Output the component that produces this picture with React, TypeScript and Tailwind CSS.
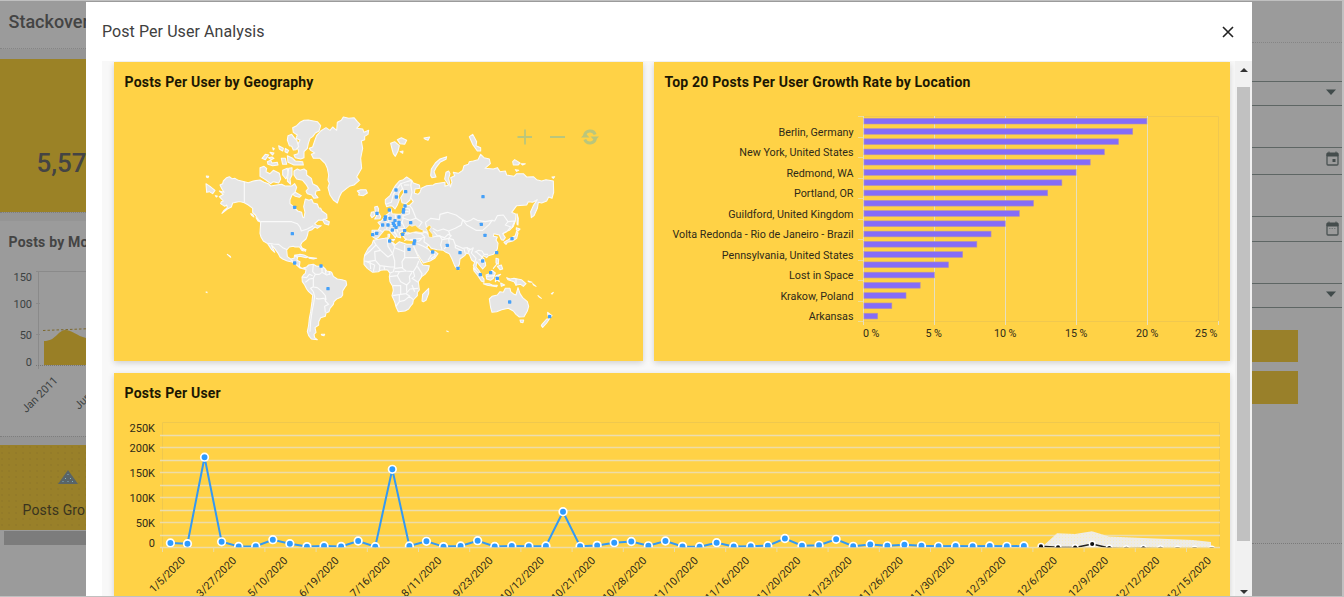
import React from "react";

const LAND = "#e5e5e5";
const EDGE = "#fafafa";

const AMERICAS: string[] = [
  "58,258 72,262 66,252 60,240 68,236 70,228 80,218 88,215 96,221 105,220 115,226 133,230 145,233 160,228 180,225 192,232 205,236 212,243 230,240 245,238 255,243 275,243 284,236 290,247 285,262 276,270 270,284 270,296 280,305 293,318 305,322 308,336 312,338 315,322 311,305 316,282 327,286 335,283 340,294 352,297 356,308 362,310 366,318 380,328 381,340 370,346 356,345 344,356 352,362 364,362 352,370 345,366 336,374 325,378 322,392 318,402 306,412 302,420 310,438 305,436 298,425 285,426 280,424 268,426 260,435 262,455 272,462 282,460 284,450 294,450 291,466 300,470 298,484 306,490 318,488 314,493 300,489 290,480 280,472 262,468 248,462 240,456 235,446 222,428 214,420 224,442 215,434 203,416 190,408 183,396 180,385 182,352 175,345 166,330 158,322 158,310 145,300 133,293 122,290 115,290 98,294 94,306 82,312 66,325 72,316 82,308 80,300 74,304 62,296 64,290 70,288 58,275 70,268",
  "278,68 290,62 300,52 312,46 325,45 352,50 362,62 357,78 346,84 338,95 330,100 325,115 322,130 312,140 312,158 302,162 286,158 282,150 294,146 296,138 290,125 300,105 288,100 292,90 280,82",
  "264,92 275,88 284,100 290,105 296,125 288,134 280,135 275,124 268,122 262,105",
  "345,105 350,92 362,78 378,68 390,76 398,66 410,76 412,52 424,46 430,36 446,40 462,38 472,50 480,58 470,70 488,72 492,82 506,76 504,88 494,94 494,104 484,108 488,130 484,150 482,160 485,190 478,202 470,216 478,226 462,240 448,244 440,250 425,262 418,276 412,294 400,285 390,270 384,248 388,235 384,225 386,210 382,190 376,176 368,168 360,160 340,160 334,148 344,144 332,136 328,130 338,126",
  "180,188 192,184 200,190 198,200 210,206 220,196 238,205 242,222 236,234 220,230 212,236 196,224 180,214",
  "282,198 292,192 300,196 312,192 320,198 320,210 334,220 338,236 352,244 360,256 348,258 346,268 354,278 342,280 335,270 322,266 318,258 325,250 318,238 308,226 290,222 282,210",
  "248,196 262,190 264,206 258,222 248,210", "266,190 276,188 276,210 270,222 272,238 262,228",
  "186,160 196,148 206,150 196,164", "202,170 212,166 216,174 232,172 234,180 218,182 204,178",
  "236,122 250,130 248,138 238,132", "256,130 266,136 262,144 255,140", "244,160 256,160 260,178 248,178", "262,152 278,160 286,168 308,170 310,180 282,180 264,172",
  "210,142 222,144 218,150", "218,128 223,131 220,135", "205,158 216,156 222,160 214,164", "18,236 30,244 45,256 38,266 28,260 20,262", "19,213 26,214 24,218 20,217", "46,272 52,273 49,276",
  "286,262 304,272 298,277 286,274 278,268", "472,258 482,254 498,254 502,264 490,272 476,270 478,264", "368,346 372,342 378,346 388,350 386,360 374,356", "152,326 158,328 162,336 156,332", "168,338 180,350 174,348",
  "284,452 300,448 312,450 324,456 318,458 300,454 290,456", "326,457 338,458 350,460 340,462 328,460", "304,428 318,434 316,439", "82,448 91,454 92,457", "364,688 374,688 372,692 366,691", "18,561 21,561 21,563",
  "312,488 320,486 326,480 340,478 350,484 366,483 376,492 380,498 392,500 396,504 400,514 412,522 426,524 438,528 440,540 434,548 428,558 428,570 424,576 410,582 402,590 400,598 390,610 387,620 378,624 376,634 362,638 356,650 356,660 345,668 348,682 342,688 344,698 352,704 334,702 326,692 322,680 326,660 328,640 332,620 336,590 338,570 326,560 320,552 314,540 307,530 306,516 312,508 316,505 318,494",
];

const AMERICA_BORDERS: string[] = [
  "133,230 133,293", "182,350 275,350 292,356 300,366 304,378 322,372 340,362", "205,415 220,417 236,418 248,428 262,434", "272,464 278,468 280,474",
  "340,478 338,500 346,508 340,520 328,522 316,532", "306,516 320,518 328,508 338,512", "340,520 340,545 332,550 340,560", "345,508 358,508 366,502 380,510 392,506", "366,483 366,500", "376,494 378,508", "388,500 388,510",
  "340,546 352,548 366,560 376,572 378,584 370,580 356,582 348,580", "340,560 344,575 340,600 336,620 332,650 330,680", "376,574 376,588 386,598 374,604 376,622",
];

const OLD_WORLD: string[] = [
  "40,406 60,402 74,400 84,398 88,410 100,414 106,420 118,410 140,418 160,418 164,432 172,450 182,470 188,480 208,482 205,495 195,508 185,515 175,530 178,555 172,562 172,572 160,585 158,596 152,603 146,612 135,618 115,620 108,605 104,590 96,572 100,556 98,544 90,530 88,515 90,505 84,496 78,494 62,496 55,500 38,502 30,496 22,490 12,478 12,462 14,450 25,430 36,418",
  "36,394 36,376 55,375 62,362 54,352 64,348 70,340 76,332 88,324 86,316 92,310 96,326 110,328 124,327 132,318 130,304 136,299 148,302 160,290 152,278 154,262 152,244 155,226 160,234 178,240 180,250 165,252 163,265 174,268 180,262 184,250 200,242 220,240 226,236 240,234 255,232 255,244 266,240 254,222 258,202 266,198 270,206 266,220 271,246 276,232 272,218 284,212 280,202 295,205 308,196 312,182 325,178 328,170 340,168 354,164 362,148 372,158 388,162 391,176 375,190 400,192 412,188 420,200 436,198 440,210 462,214 470,206 490,206 500,216 520,215 530,224 545,228 558,224 580,228 581,262 576,280 566,276 560,288 545,294 535,292 532,310 522,332 514,338 512,320 520,302 532,284 518,292 505,290 500,300 470,302 455,322 468,328 466,348 460,364 448,376 438,380 428,386 436,398 430,406 424,404 418,390 402,386 400,394 412,396 408,405 414,415 412,432 400,448 385,452 380,458 370,452 364,460 376,472 377,482 368,492 358,480 350,470 348,486 358,498 366,514 360,514 350,500 340,482 344,472 335,465 328,448 320,444 314,452 300,462 298,478 290,490 284,482 276,462 268,446 258,442 250,436 232,434 214,430 206,420 200,426 212,440 226,440 234,446 224,460 210,468 190,474 182,462 172,446 162,426 164,408 150,406 138,404 128,392 140,384 130,378 118,384 122,398 112,396 108,386 98,370 90,370 110,390 106,398 100,390 88,376 74,374 66,384 56,396 48,402",
  "80,305 76,294 76,284 90,272 100,252 106,242 118,228 130,224 140,216 155,226 152,240 156,262 150,285 138,296 126,293 122,278 132,262 128,250 118,262 114,276 118,284 112,300 105,312 98,304 90,302",
  "44,306 52,304 56,312 54,322 62,334 60,341 44,342 50,332 46,322", "34,322 42,320 44,332 36,338 32,332",
  "186,588 188,568 200,556 206,550 206,565 198,586 190,590", "388,582 396,574 412,570 420,560 430,562 436,550 450,550 452,560 462,568 468,570 474,548 480,566 488,578 502,590 506,604 502,618 492,635 478,636 468,628 460,618 445,610 425,614 410,620 396,622 392,608 390,595",
  "480,645 491,645 489,653 482,652", "563,622 576,632 568,640 564,632", "546,658 560,642 568,642 560,654 548,667 544,662",
  "340,488 348,496 360,508 372,522 372,532 364,528 352,510 342,498", "370,536 388,536 398,541 412,541 410,545 382,541", "378,510 388,506 396,496 406,504 400,520 392,526 380,522", "408,512 422,508 412,516 418,530 410,524 406,530",
  "440,518 450,522 462,520 484,524 498,536 490,544 482,538 468,540 462,530 444,524", "408,460 416,462 415,478 408,474", "412,484 424,480 428,492 420,494", "400,490 410,478", "296,486 299,490 296,494",
  "432,412 442,406 454,398 466,392 470,378 474,384 470,400 458,408 442,412 438,418", "469,368 480,372 474,378 469,374", "471,326 475,340 474,360 471,358",
  "92,115 104,110 118,122 114,138 106,154 100,146 96,132", "112,104 124,98 140,106 134,118 120,116", "120,140 129,138 128,145", "192,99 209,96 204,106 196,103", "212,212 214,192 226,174 240,162 260,155 258,163 240,172 228,188 222,200 228,216 216,218",
  "328,95 338,88 350,110 348,122 362,128 362,138 352,138 338,118", "458,170 464,164 480,174 474,180 460,180", "483,176 496,176 488,180", "466,194 476,196 470,199", "576,216 584,215 580,220",
  "504,528 516,532 508,531", "518,536 528,544 522,541", "534,572 544,580 538,576", "574,566 580,562 577,567", "260,678 265,680", "140,402 134,407", "94,404 104,403 100,408", "84,388 89,388 88,397 84,396", "422,534 434,540 424,544",
];

const WATERS: string[] = [
  "134,374 148,360 156,364 166,360 176,370 190,376 188,383 168,380 150,384 138,380",
  "198,370 208,360 214,366 208,376 218,388 218,398 206,396 204,382",
];

const BORDERS: string[] = [
  "40,406 48,420 30,438 14,452", "48,420 62,436 84,456 98,446 84,424 82,400", "62,436 44,440 46,466 24,470 12,468", "98,446 104,424 96,412", "104,428 134,440 134,420", "134,440 134,458 174,458", "134,458 126,470 128,490 138,498 160,500 170,484 176,468", "98,446 104,468 104,486 92,486 60,482 46,466", "60,482 58,498", "72,484 74,494", "44,480 40,500", "30,470 32,492", "20,470 44,480", "104,486 100,500 90,504", "126,488 104,490", "104,500 120,500 138,498", "88,515 112,512 118,500", "112,512 122,530 140,540 150,530 148,515 156,502", "160,500 164,514 156,520 174,532", "172,484 186,506 184,516", "98,542 122,542 122,568 98,572", "122,568 138,566 150,552 174,550", "140,540 140,560", "118,570 118,590 108,604", "118,590 134,586 148,574 160,584", "138,566 150,574", "156,540 164,560", "40,392 44,378", "58,376 68,380", "72,344 84,354 80,372", "86,330 86,350", "84,354 100,356 112,350", "106,330 108,348 126,352 130,340 128,328", "92,362 108,362 126,354", "108,362 114,382", "116,372 134,370", "126,352 134,368", "126,338 150,346 168,340 186,352 176,366", "132,308 148,312 148,326 130,332", "132,318 146,320", "148,300 156,310 168,340", "78,298 94,292 100,268 122,236 140,230 155,226", "122,236 128,252", "132,240 148,240", "140,388 160,382 184,386 194,396 184,400 150,404", "184,386 198,380 206,390", "176,372 200,384",
  "194,396 192,410 206,420", "164,410 178,408 186,400", "172,416 190,424 204,432", "212,462 226,452 218,440", "204,466 214,450", "218,396 240,392 246,404 242,420 246,434", "196,352 212,340 238,344 240,328 262,322 288,330 308,344", "196,352 200,368 214,366", "308,344 320,350 332,346 340,340 352,346 376,350 396,346 404,348 412,332 430,330 444,350 464,348 456,368", "308,344 304,360 286,370 266,378 250,372 232,378 218,370", "220,378 232,392 254,398 264,388 274,392 266,400 246,404", "266,378 270,390", "308,344 320,360 348,376 368,376 388,358 396,346", "444,350 436,360 452,366 442,378", "266,400 268,416 252,432", "266,400 280,404 286,420 308,430 322,428 332,434 340,428", "286,420 286,428 308,438", "312,432 316,446", "322,428 326,442 330,430", "340,428 334,444 348,460 344,472", "348,440 360,450 372,462 370,476", "344,442 356,436 366,438 372,448 384,448", "356,464 374,466", "428,386 440,380", "468,522 468,542", "378,514 404,512",
];

const AMERICA_DOTS = [[284, 307], [277, 386], [284, 474], [363, 483], [384, 551]];
const OLD_WORLD_DOTS = [
  [108, 255], [137, 260], [109, 276], [51, 325], [88, 315], [135, 303], [131, 314], [130, 321], [76, 336], [75, 343], [90, 340], [117, 336], [105, 347], [68, 360], [84, 360], [100, 355], [117, 352], [117, 359], [103, 361], [108, 367], [152, 353], [97, 375], [134, 377], [128, 388], [50, 385], [38, 389], [89, 408], [164, 408], [162, 416], [147, 433], [218, 441], [262, 421], [300, 443], [294, 490], [369, 275], [364, 358], [375, 391], [456, 401], [410, 443], [368, 468], [361, 509], [392, 503], [412, 520], [449, 591], [569, 635],
];

function Dots({ points }: { points: number[][] }) {
  return (
    <>
      {points.map(([x, y]) => (
        <rect key={`${x}-${y}`} x={x - 5} y={y - 5} width={10} height={10} rx={2} fill="#45a0f8" />
      ))}
    </>
  );
}

function Shapes({ items }: { items: string[] }) {
  return (
    <g fill={LAND} stroke={EDGE} strokeWidth={3.2} strokeLinejoin="round">
      {items.map((p) => (
        <polygon key={p} points={p} />
      ))}
    </g>
  );
}

function Lines({ items }: { items: string[] }) {
  return (
    <g fill="none" stroke={EDGE} strokeWidth={3.4} strokeLinejoin="round">
      {items.map((p) => (
        <polyline key={p} points={p} />
      ))}
    </g>
  );
}

function WorldMap() {
  return (
    <svg className="block h-[263px] w-full" viewBox="114 98 529 263">
      <g transform="translate(200 105) scale(0.33333)">
        <Shapes items={AMERICAS} />
        <Lines items={AMERICA_BORDERS} />
        <Dots points={AMERICA_DOTS} />
      </g>
      <g transform="translate(360 105) scale(0.33333)">
        <Shapes items={OLD_WORLD} />
        <Lines items={BORDERS} />
        <g fill="#ffd246" stroke={EDGE} strokeWidth={2}>
          {WATERS.map((p) => (
            <polygon key={p} points={p} />
          ))}
        </g>
        <Dots points={OLD_WORLD_DOTS} />
      </g>
      <g stroke="#bac67c" strokeWidth={1.8} fill="none">
        <path d="M517.5 137h14.5M525 129.500v15M550 137h15" />
        <path d="M584.600 136a5.500 5.500 0 0 1 10.600-1.500M595.400 138a5.500 5.500 0 0 1-10.600 1.500" strokeWidth={3} />
        <path d="M590.500 136.500h8.500l-4.200 4.500zM589.500 137.500h-8.500l4.200-4.500z" fill="#bac67c" stroke="none" />
      </g>
    </svg>
  );
}

const LOCATIONS = ["Berlin, Germany", "New York, United States", "Redmond, WA", "Portland, OR", "Guildford, United Kingdom", "Volta Redonda - Rio de Janeiro - Brazil", "Pennsylvania, United States", "Lost in Space", "Krakow, Poland", "Arkansas"];

function GrowthChart() {
  const bars = Array.from({ length: 20 }, (_, i) => 20 - i);
  return (
    <svg className="block h-[263px] w-full font-[Roboto,sans-serif] text-[10.750px]" viewBox="654 98 576 263">
      <path d="M863 116.500H1218.500V321.500H863" fill="none" stroke="#f0c84f" />
      <path d="M863.500 116v206M934.500 116v209M1005.500 116v209M1076.500 116v209M1147.500 116v209M863.500 321v4M1218.500 321v4" stroke="#e6dfc0" />
      <g stroke="#ecdda0">
        {Array.from({ length: 11 }, (_, i) => (
          <path key={i} d={`M858 ${Math.round(116 + i * 20.5) + 0.5}h5`} />
        ))}
      </g>
      {bars.map((v, i) => (
        <rect key={v} x={864} y={118.3 + i * 10.26} width={v * 14.17 - 0.5} height={5.7} fill="#856cf8" stroke="#b493ae" strokeWidth={0.6} />
      ))}
      <g fill="#2f2a18" textAnchor="end">
        {LOCATIONS.map((name, i) => (
          <text key={name} x={853.5} y={136 + i * 20.45}>{name}</text>
        ))}
        <text x={879.5} y={337}>0 %</text>
        <text x={942} y={337}>5 %</text>
        <text x={1016.5} y={337}>10 %</text>
        <text x={1087.5} y={337}>15 %</text>
        <text x={1158.5} y={337}>20 %</text>
        <text x={1217.5} y={337}>25 %</text>
      </g>
    </svg>
  );
}

const POST_Y = [543, 543.7, 457.2, 541.8, 546.5, 546.3, 539.7, 543.7, 546.6, 546, 546.4, 541, 546.7, 469.3, 546, 541.3, 546.6, 546, 540.7, 546.5, 546, 546.3, 546, 511.7, 546.3, 545.4, 542.7, 541.5, 545.8, 541, 546.4, 546.7, 542.7, 546.5, 546.2, 545.7, 538.5, 545.7, 545.3, 539.3, 546.3, 544.5, 545.8, 544.7, 545.8, 546.3, 546, 546.3, 546, 546.3, 546];
const FORECAST_Y = [546.4, 547.2, 547.5, 544, 548, 548.8, 548.4, 548.8, 549, 549, 549];
const DATES = ["1/5/2020", "3/27/2020", "5/10/2020", "6/19/2020", "7/16/2020", "8/11/2020", "9/23/2020", "10/12/2020", "10/21/2020", "10/28/2020", "11/10/2020", "11/16/2020", "11/20/2020", "11/23/2020", "11/26/2020", "11/30/2020", "12/3/2020", "12/6/2020", "12/9/2020", "12/12/2020", "12/15/2020"];
const pointX = (i: number) => 170.4 + i * 17.07;

function PostsChart() {
  const posts = POST_Y.map((y, i) => `${pointX(i)},${y}`).join(" ");
  const forecast = FORECAST_Y.map((y, i) => `${pointX(i + 51)},${y}`).join(" ");
  const ticks = [["250K", 432], ["200K", 452], ["150K", 477], ["100K", 502], ["50K", 527], ["0", 547]] as const;
  return (
    <svg className="block h-[187px] w-full font-[Roboto,sans-serif] text-[11px]" viewBox="114 409 1116 187">
      <defs>
        <clipPath id="plot"><rect x={160} y={420} width={1060} height={127.3} /></clipPath>
        <pattern id="grain" width={3} height={3} patternUnits="userSpaceOnUse">
          <rect width={3} height={3} fill="#eeece6" />
          <rect width={1} height={1} fill="#f7ecc4" />
        </pattern>
      </defs>
      <path d="M162.500 547V422.500H1219.500V547" fill="none" stroke="#efc84e" />
      {[435, 447.5, 460, 472.5, 485, 497.5, 510, 522.5, 535, 547.5].map((y) => (
        <path key={y} d={`M160 ${Math.floor(y) + 0.5}H1220`} stroke={y % 1 ? "#eddca6" : "#ebddb0"} strokeWidth={1.4} />
      ))}
      {DATES.map((d, i) => (
        <path key={d} d={`M${162.5 + i * 51.2} 547v5`} stroke="#e9dca8" />
      ))}
      <polygon points="1042,547 1057,533.300 1075,534 1092,531.300 1109,536.500 1143,538 1193,540 1211,542 1211,547" fill="url(#grain)" />
      <g clipPath="url(#plot)">
        <polyline points={posts} fill="none" stroke="#3399f3" strokeWidth={2} />
        <polyline points={forecast} fill="none" stroke="#222" strokeWidth={1.6} />
        {POST_Y.map((y, i) => (
          <circle key={i} cx={pointX(i)} cy={y} r={3.8} fill="#2e9bff" stroke="#fff" strokeWidth={1.7} />
        ))}
        {FORECAST_Y.map((y, i) => (
          <circle key={i} cx={pointX(i + 51)} cy={y} r={2.8} fill="#111" stroke="#fff" strokeWidth={1.5} />
        ))}
      </g>
      <g fill="#2f2a18" textAnchor="end">
        {ticks.map(([label, y]) => (
          <text key={label} x={155} y={y}>{label}</text>
        ))}
        {DATES.map((d, i) => (
          <text key={d} transform={`translate(${185.7 + i * 51.3} 561.3) rotate(-45)`} className="text-[10.800px]">{d}</text>
        ))}
      </g>
    </svg>
  );
}

function Card({ title, className, children }: { title: string; className: string; children: React.ReactNode }) {
  return (
    <section className={`flex flex-col overflow-hidden bg-[#ffd246] shadow-[0_2px_6px_rgba(0,0,0,0.16)] ${className}`}>
      <h2 className="h-[36px] shrink-0 pl-[10.500px] pt-[10px] text-[14px] font-bold leading-[20px] tracking-[0.2px] text-[#1b1703]">{title}</h2>
      {children}
    </section>
  );
}

function Caret() {
  return <svg className="h-[6px] w-[12px]" viewBox="0 0 12 6"><path d="M1 0.500h10L6 6z" fill="#414b4b" /></svg>;
}

function Calendar({ day }: { day?: boolean }) {
  return (
    <svg className="h-[15px] w-[13px]" viewBox="0 0 13 15" fill="none">
      <rect x={1} y={3} width={11} height={11} rx={1} stroke="#4b5353" strokeWidth={1.3} />
      <path d="M1 2h11v3H1zM3 0.500v2M10 0.500v2" fill="#454d4d" stroke="#454d4d" />
      {day ? <path d="M6.500 8h3v3h-3z" fill="#454d4d" /> : <path d="M3 7.500h7" stroke="#727979" strokeDasharray="1.500 1" />}
    </svg>
  );
}

function Field({ className, children }: { className: string; children: React.ReactNode }) {
  return <div className={`flex items-center justify-end border-y border-[#5e6664] ${className}`}>{children}</div>;
}

function LeftPanel() {
  return (
    <div className="flex w-[86px] shrink-0 flex-col overflow-hidden whitespace-nowrap">
      <div className="h-[48px] shrink-0 border-b border-dotted border-[#858585] pl-[8.500px] pt-[9px] text-[18px] font-medium leading-[24px] text-[#444]">Stackover</div>
      <div className="h-[10px] shrink-0 bg-[#959595]" />
      <div className="h-[153px] shrink-0 bg-[#9b8226] pl-[36.500px] pt-[88px] text-[26px] font-medium leading-[32px] text-[#444]">5,57</div>
      <div className="h-[9px] shrink-0 border-t border-dotted border-[#7e7e7e] bg-[#959595]" />
      <div className="h-[215px] shrink-0">
        <h3 className="h-[42px] pl-[8.500px] pt-[11px] text-[14px] font-bold leading-[20px] tracking-[0.2px] text-[#444]">Posts by Mo</h3>
        <svg className="block h-[173px] w-[86px] font-[Roboto,sans-serif] text-[11px]" viewBox="0 263 86 173">
          <path d="M36 271.500h50M38.500 271v98M36 303.500h4M36 334.500h4" fill="none" stroke="#8a8a8a" />
          <path d="M44 365V341C56 341 57 331 65 330C72 330 77 336 86 338V365z" fill="#997f26" />
          <path d="M43 330.500L86 328.800" stroke="#7d692d" strokeDasharray="2.500 2" />
          <path d="M36 365.500h50" stroke="#777" strokeDasharray="1 1" />
          <g fill="#3c4242" textAnchor="end">
            <text x={32} y={281}>150</text>
            <text x={32} y={308}>100</text>
            <text x={32} y={339}>50</text>
            <text x={32} y={366}>0</text>
            <text transform="translate(58.5 381) rotate(-45)">Jan 2011</text>
          </g>
          <text transform="translate(79 410) rotate(-45)" fill="#3c4242">Jun</text>
        </svg>
      </div>
      <div className="h-[9px] shrink-0 border-t border-dotted border-[#7e7e7e] bg-[#959595]" />
      <div className="flex h-[85px] shrink-0 flex-col bg-[#998029] bg-[radial-gradient(circle_at_2px_2px,#8f7829_0.500px,transparent_1px)] bg-[length:7px_6px] pl-[22.500px] pt-[25px]">
        <svg className="ml-[35px] block h-[14px] w-[20px]" viewBox="0 0 20 14">
          <path d="M10 0L20 14H0z" fill="#596468" />
          <path d="M9.500 4.500h1M7 8.500h1M12 8.500h1M4.500 11.500h1M9.500 11.500h1M14 11.500h1" stroke="#83b1c2" strokeWidth={1} />
        </svg>
        <span className="mt-[16px] text-[14px] leading-[20px] tracking-[0.15px] text-[#39341f]">Posts Gro</span>
      </div>
      <div className="my-[1px] ml-[4px] h-[14px] shrink-0 bg-[#7c7c7c]" />
    </div>
  );
}

function RightPanel() {
  return (
    <div className="flex w-[90px] shrink-0 flex-col">
      <div className="h-[42px] shrink-0 border-b border-dotted border-[#858585]" />
      <Field className="mt-[38px] h-[25px] pb-[4px] pr-[5px]"><Caret /></Field>
      <Field className="mt-[41px] h-[28px] pb-[5px] pr-[3px]"><Calendar day /></Field>
      <Field className="mt-[41px] h-[26px] pb-[2px] pr-[3px]"><Calendar /></Field>
      <Field className="mt-[41px] h-[25px] pb-[4px] pr-[5px]"><Caret /></Field>
      <div className="mr-[44px] mt-[22px] h-[32px] bg-[#99802a]" />
      <div className="mr-[44px] mt-[9px] h-[33px] bg-[#99802a]" />
      <div className="mt-[139px] border-t border-dotted border-[#7a7a7a]" />
    </div>
  );
}

function Dialog() {
  return (
    <div className="absolute left-[86px] top-[2px] flex h-[594px] w-[1166px] flex-col bg-white">
      <header className="flex h-[59px] shrink-0 items-center justify-between pl-[16px] pr-[18px]">
        <h1 className="text-[16px] font-normal leading-[24px] tracking-[0.080px] text-[#404040]">Post Per User Analysis</h1>
        <svg className="h-[12px] w-[12px]" viewBox="0 0 12 12"><path d="M1 1l10 10M11 1L1 11" stroke="#222" strokeWidth={1.6} /></svg>
      </header>
      <div className="flex min-h-0 flex-1 pl-[16px]">
        <main className="flex min-w-0 flex-1 flex-col gap-[12px] overflow-hidden bg-[#f8f8f8] pl-[12px] pr-[5px] pt-px">
          <div className="flex shrink-0 gap-[11px]">
            <Card title="Posts Per User by Geography" className="h-[299px] w-[529px]"><WorldMap /></Card>
            <Card title="Top 20 Posts Per User Growth Rate by Location" className="h-[299px] w-[576px]"><GrowthChart /></Card>
          </div>
          <Card title="Posts Per User" className="h-[223px] w-[1116px] shrink-0"><PostsChart /></Card>
        </main>
        <div className="flex w-[17px] shrink-0 flex-col items-center bg-[#f1f1f1]">
          <svg className="mt-[7px] h-[4px] w-[8px] shrink-0" viewBox="0 0 8 4"><path d="M0 4h8L4 0z" fill="#333" /></svg>
          <div className="mt-[15px] h-[454px] w-[13px] bg-[#c1c1c1]" />
          <svg className="mt-[49px] h-[4px] w-[8px] shrink-0" viewBox="0 0 8 4"><path d="M0 0h8L4 4z" fill="#333" /></svg>
        </div>
      </div>
    </div>
  );
}

export default function App() {
  return (
    <div className="relative h-[597px] w-[1344px] overflow-hidden bg-[#c0c0c0] pb-px pr-[2px] pt-px font-[Roboto,sans-serif]">
      <div className="flex h-full justify-between bg-[#9b9b9b]">
        <LeftPanel />
        <RightPanel />
      </div>
      <Dialog />
    </div>
  );
}
